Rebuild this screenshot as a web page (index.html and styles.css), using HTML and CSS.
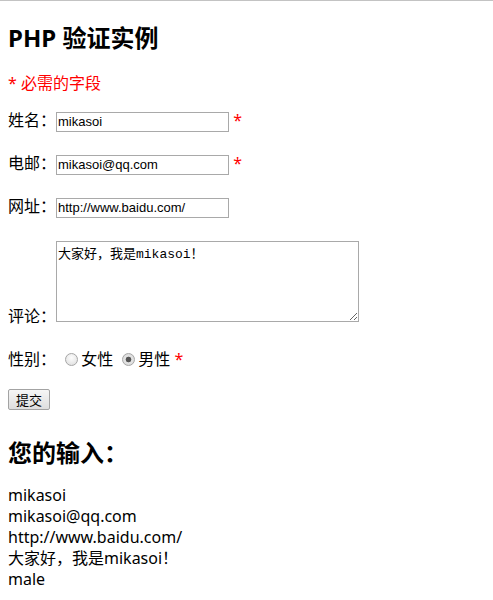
FILE: index.html
```html
<!DOCTYPE html>
<html lang="zh-CN">
<head>
    <meta charset="UTF-8">
    <title>PHP 验证实例</title>
    <link rel="stylesheet" href="styles.css">
</head>
<body>
    <h2 class="title">PHP 验证实例</h2>
    <p><span class="error">* 必需的字段</span></p>
    <form class="signup">
        姓名：<input type="text" name="name" value="mikasoi"> <span class="error">*</span>
        <br><br>
        电邮：<input type="text" name="email" value="mikasoi@qq.com"> <span class="error">*</span>
        <br><br>
        网址：<input type="text" name="website" value="http://www.baidu.com/">
        <br><br>
        评论：<textarea name="comment" rows="5" cols="40">大家好，我是mikasoi！</textarea>
        <br><br>
        性别：
        <input type="radio" name="gender" value="female">女性
        <input type="radio" name="gender" value="male" checked>男性
        <span class="error">*</span>
        <br><br>
        <input type="submit" name="submit" value="提交">
    </form>
    <h2 class="result-title">您的输入：</h2>
    <div class="result">
        mikasoi<br>
        mikasoi@qq.com<br>
        http://www.baidu.com/<br>
        大家好，我是mikasoi！<br>
        male
    </div>
</body>
</html>
```

FILE: styles.css
```css
/* General */
html {
    border-top: 1px solid #c3c3c3;
}

body {
    margin: 8px;
    font-family: "Noto Sans", "Noto Sans CJK SC", sans-serif;
    font-size: 16px;
    line-height: 21px;
    color: #000;
    background: #fff;
}

h2 {
    font-size: 24px;
    font-weight: bold;
    line-height: 32px;
}

.title {
    margin: 13px 0 19px;
}

.result-title {
    margin: 23px 0 16px;
}

.error {
    color: #ff0000;
}

/* Form */
.signup {
    line-height: 21.5px;
}

.signup input[type="text"] {
    width: 169px;
    height: 16px;
    padding: 1px;
    border: 1px solid #a9a9a9;
    font-family: "Liberation Sans", sans-serif;
    font-size: 13px;
    margin: 0;
}

.signup textarea {
    width: 299px;
    height: 77px;
    padding: 1px;
    border: 1px solid #a9a9a9;
    font-family: "Liberation Mono", "Noto Sans CJK SC", monospace;
    font-size: 13px;
    margin: 2px 0 0;
}

.signup input[type="radio"] {
    appearance: none;
    -webkit-appearance: none;
    width: 13px;
    height: 13px;
    margin: 3px 3px 0 5px;
    border: 1px solid #a6a6a6;
    border-radius: 50%;
    background: radial-gradient(circle at 50% 35%, #fdfdfd, #dcdcdc);
    box-sizing: border-box;
    vertical-align: -1px;
}

.signup input[type="radio"]:checked {
    background: radial-gradient(circle, #555 0, #555 2.5px, #e4e4e4 3.2px, #d6d6d6 100%);
}

.signup input[type="submit"] {
    font-family: "Noto Sans CJK SC", sans-serif;
    font-size: 13px;
    line-height: 17px;
    height: 21px;
    padding: 0 7px;
    border: 1px solid #a3a3a3;
    border-radius: 2px;
    background: linear-gradient(#f6f6f6, #dedede);
    margin: -5px 0 0;
    vertical-align: 3px;
}

/* Output */
.result {
    line-height: 21px;
}
```
